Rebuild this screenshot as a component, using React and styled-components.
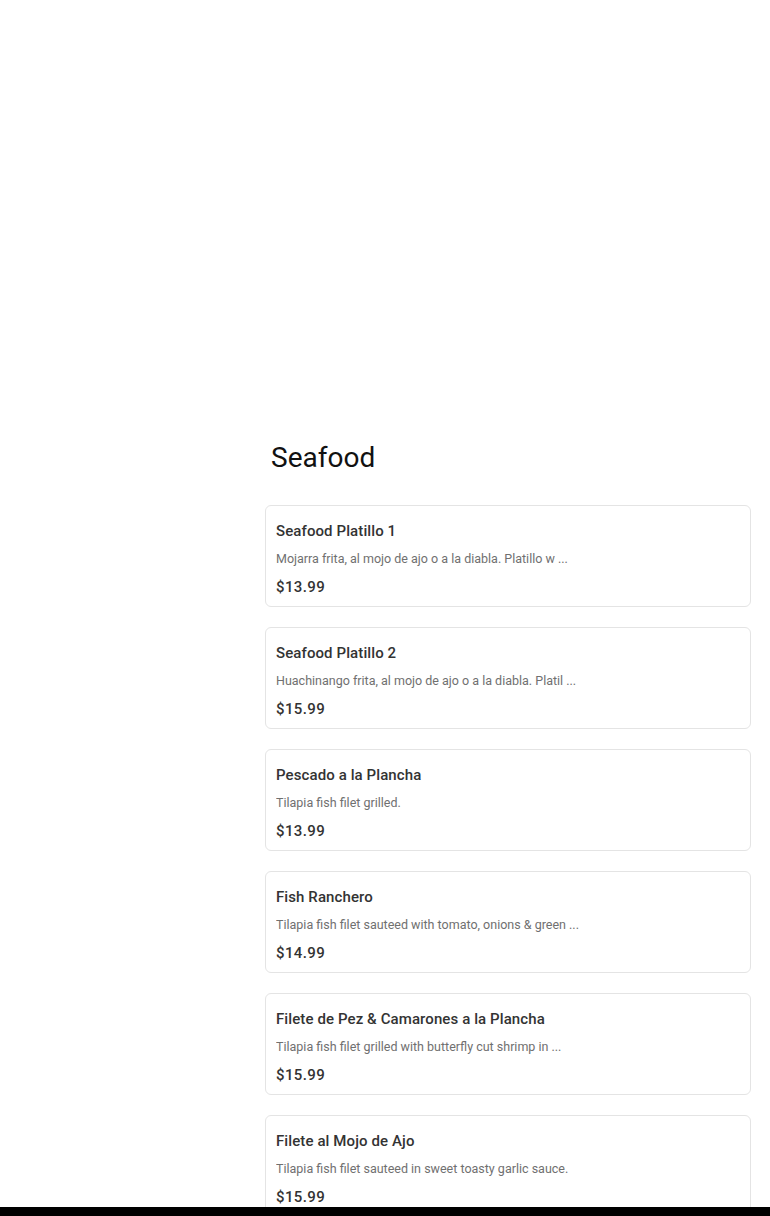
import React from 'react';
import styled, { createGlobalStyle } from 'styled-components';

const GlobalStyle = createGlobalStyle`
  html, body {
    margin: 0;
    padding: 0;
    background: #ffffff;
    font-family: Roboto, "Liberation Sans", Arial, sans-serif;
  }
`;

const Page = styled.div`
  display: grid;
  grid-template-columns: 265px 1fr;
  padding-top: 431px;
  padding-right: 19px;
`;

const Sidebar = styled.div``;

const Section = styled.section`
  display: flex;
  flex-direction: column;
  gap: 20px;
  padding-bottom: 40px;
`;

const Heading = styled.h2`
  margin: 0 0 0 6px;
  font-size: 28px;
  font-weight: 400;
  line-height: 54px;
  color: #111;
`;

const Card = styled.div`
  border: 1px solid #e4e4e4;
  border-radius: 6px;
  padding: 11px 10px 5px;
  display: flex;
  flex-direction: column;
`;

const ItemName = styled.div`
  font-size: 15px;
  font-weight: 500;
  line-height: 28px;
  color: #333;
  letter-spacing: 0.1px;
`;

const ItemDesc = styled.div`
  font-size: 12.5px;
  font-weight: 400;
  line-height: 28px;
  color: #707070;
  white-space: nowrap;
  overflow: hidden;
`;

const ItemPrice = styled.div`
  font-size: 15px;
  font-weight: 500;
  line-height: 28px;
  color: #333;
  letter-spacing: 0.4px;
`;

const BottomBar = styled.div`
  position: fixed;
  left: 0;
  right: 0;
  bottom: 0;
  height: 9px;
  background: #000;
`;

const items = [
  { name: 'Seafood Platillo 1', desc: 'Mojarra frita, al mojo de ajo o a la diabla. Platillo w ...', price: '$13.99' },
  { name: 'Seafood Platillo 2', desc: 'Huachinango frita, al mojo de ajo o a la diabla. Platil ...', price: '$15.99' },
  { name: 'Pescado a la Plancha', desc: 'Tilapia fish filet grilled.', price: '$13.99' },
  { name: 'Fish Ranchero', desc: 'Tilapia fish filet sauteed with tomato, onions & green ...', price: '$14.99' },
  { name: 'Filete de Pez & Camarones a la Plancha', desc: 'Tilapia fish filet grilled with butterfly cut shrimp in ...', price: '$15.99' },
  { name: 'Filete al Mojo de Ajo', desc: 'Tilapia fish filet sauteed in sweet toasty garlic sauce.', price: '$15.99' },
];

const App = () => {
  return (
    <>
      <GlobalStyle />
      <Page>
        <Sidebar />
        <Section>
          <Heading>Seafood</Heading>
          {items.map((item, index) => (
            <Card key={index}>
              <ItemName>{item.name}</ItemName>
              <ItemDesc>{item.desc}</ItemDesc>
              <ItemPrice>{item.price}</ItemPrice>
            </Card>
          ))}
        </Section>
      </Page>
      <BottomBar />
    </>
  );
};

export default App;
